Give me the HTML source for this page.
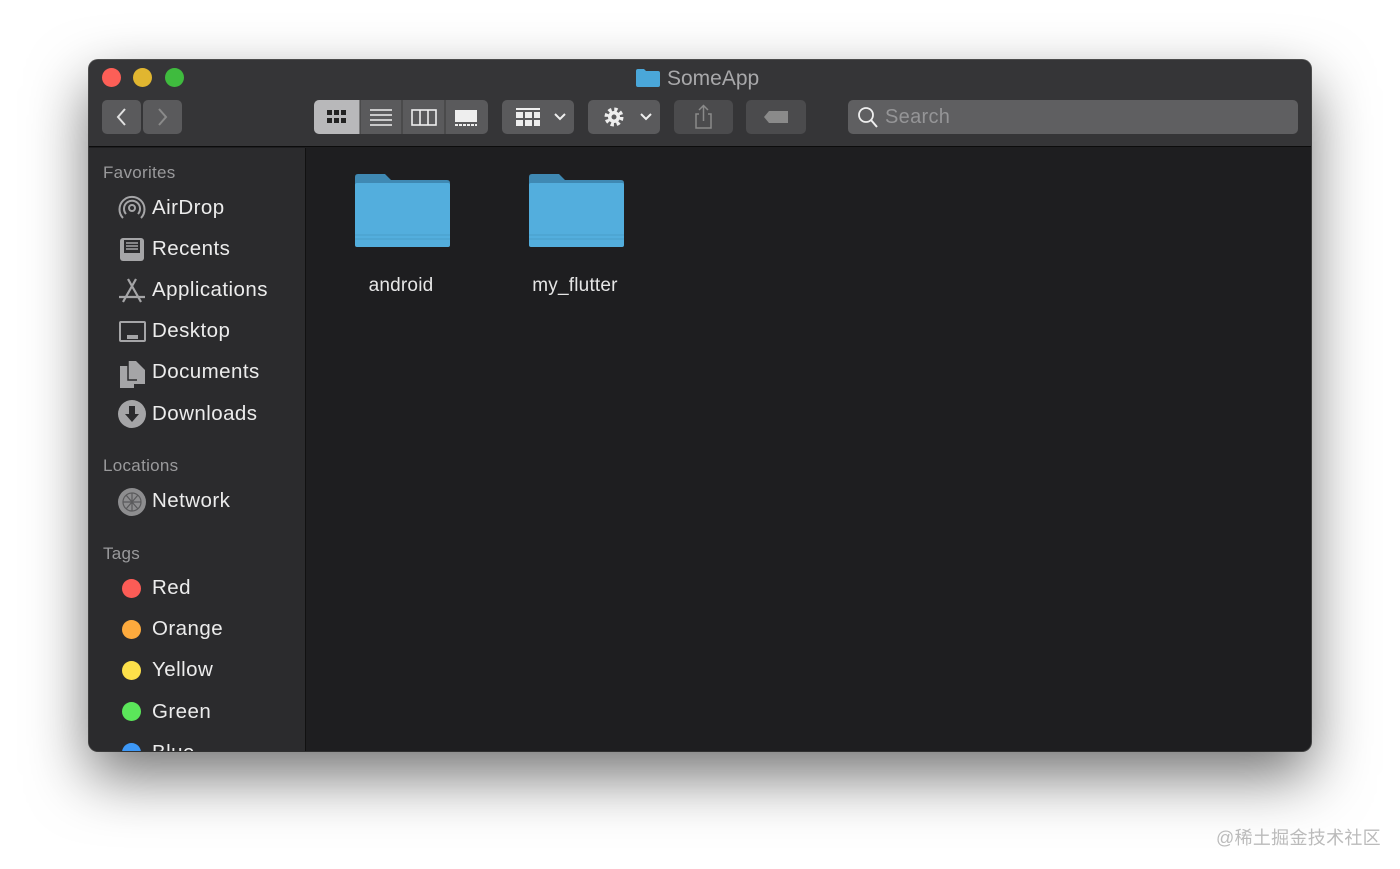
<!DOCTYPE html>
<html><head><style>
*{margin:0;padding:0;box-sizing:border-box}
body{width:1400px;height:869px;background:#fff;position:relative;overflow:hidden;font-family:"Liberation Sans",sans-serif}
.win{position:absolute;left:89px;top:60px;width:1222px;height:691px;border-radius:9px;overflow:hidden;background:#1e1e20;box-shadow:0 25px 60px rgba(0,0,0,.55),0 0 0 1px #555}
.tb{position:absolute;left:0;top:0;width:100%;height:87px;background:#353537;border-bottom:1px solid #0c0c0c}
.dot{position:absolute;top:8px;width:19px;height:19px;border-radius:50%}
.btn{position:absolute;top:40px;height:34px;background:#5a5a5c;border-radius:5px}
.side{position:absolute;left:0;top:88px;width:217px;bottom:0;background:#2b2b2d;border-right:1px solid #111}
.h{position:absolute;left:14px;color:#9a9a9c;font-size:17px;letter-spacing:.3px}
.it{position:absolute;left:63px;color:#ececec;font-size:20.5px;line-height:24px;letter-spacing:.45px}
.ic{position:absolute;left:28px}
.tag{position:absolute;left:33px;width:19px;height:19px;border-radius:50%}
.fold{position:absolute;top:113px;width:95px;height:75px}
.lbl{position:absolute;top:215px;color:#e6e6e6;font-size:19px;text-align:center;width:160px;letter-spacing:.2px}
</style></head><body>
<div class="win">
<div class="tb">
<div class="dot" style="left:13px;background:#fd5f57"></div>
<div class="dot" style="left:44px;background:#e1b630"></div>
<div class="dot" style="left:76px;background:#3fbb3e"></div>
<svg style="position:absolute;left:547px;top:8px" width="24" height="19"><path d="M0 3 Q0 1 2 1 H8 L10 3 H22 Q24 3 24 5 V17 Q24 19 22 19 H2 Q0 19 0 17Z" fill="#4aa7d9"/></svg>
<div style="position:absolute;left:578px;top:7px;color:#a8a8aa;font-size:21px">SomeApp</div>
<div class="btn" style="left:13px;width:39px"><svg width="39" height="34"><path d="M23 9 L16 17 L23 25" stroke="#e0e0e0" stroke-width="2" fill="none"/></svg></div>
<div class="btn" style="left:54px;width:39px"><svg width="39" height="34"><path d="M16 9 L23 17 L16 25" stroke="#8a8a8a" stroke-width="2" fill="none"/></svg></div>
<div class="btn" style="left:225px;width:174px;overflow:hidden">
<div style="position:absolute;left:0;top:0;width:46px;height:34px;background:#b8b8ba"></div>
<svg width="174" height="34" style="position:absolute;left:0;top:0">
<g fill="#222"><rect x="13" y="10" width="5" height="5"/><rect x="20" y="10" width="5" height="5"/><rect x="27" y="10" width="5" height="5"/><rect x="13" y="18" width="5" height="5"/><rect x="20" y="18" width="5" height="5"/><rect x="27" y="18" width="5" height="5"/></g>
<path d="M56 10H78M56 15H78M56 20H78M56 25H78" stroke="#eee" stroke-width="1.6"/>
<rect x="98" y="10" width="24" height="15" fill="none" stroke="#eee" stroke-width="1.6"/><path d="M106 10V25M114 10V25" stroke="#eee" stroke-width="1.6"/>
<rect x="141" y="10" width="22" height="12" fill="#eee"/><path d="M141 25H163" stroke="#eee" stroke-width="2" stroke-dasharray="3 1"/>
<path d="M46 0V34M88 0V34M131 0V34" stroke="#3a3a3a"/>
</svg></div>
<div class="btn" style="left:413px;width:72px"><svg width="72" height="34"><g fill="#eee"><rect x="14" y="8" width="24" height="2"/><rect x="14" y="12" width="7" height="6"/><rect x="23" y="12" width="7" height="6"/><rect x="32" y="12" width="6" height="6"/><rect x="14" y="20" width="7" height="6"/><rect x="23" y="20" width="7" height="6"/><rect x="32" y="20" width="6" height="6"/></g><path d="M53 14 L58 19 L63 14" stroke="#eee" stroke-width="2" fill="none"/></svg></div>
<div class="btn" style="left:499px;width:72px"><svg width="72" height="34"><circle cx="26" cy="17" r="7" fill="none" stroke="#eee" stroke-width="5" stroke-dasharray="3 2.5"/><circle cx="26" cy="17" r="6" fill="#eee"/><circle cx="26" cy="17" r="2.5" fill="#5a5a5c"/><path d="M53 14 L58 19 L63 14" stroke="#eee" stroke-width="2" fill="none"/></svg></div>
<div class="btn" style="left:585px;width:59px;background:#4b4b4d"><svg width="59" height="34"><path d="M25 14 H22 V28 H37 V14 H34 M29.5 21 V6 M25 10 L29.5 5.5 L34 10" stroke="#8a8a8a" stroke-width="1.5" fill="none"/></svg></div>
<div class="btn" style="left:657px;width:60px;background:#4b4b4d"><svg width="60" height="34"><path d="M18 17 L23 11 H42 V23 H23Z" fill="#8a8a8a"/></svg></div>
<div class="btn" style="left:759px;width:450px;background:#5f5f61"><svg width="30" height="34" style="position:absolute;left:6px;top:0"><circle cx="12" cy="15" r="7" fill="none" stroke="#eee" stroke-width="1.8"/><path d="M17 20 L23 27" stroke="#eee" stroke-width="2"/></svg><div style="position:absolute;left:37px;top:6px;color:#959597;font-size:20px;letter-spacing:.3px">Search</div></div>
</div>
<div class="side"></div>
<div style="position:absolute;left:0;top:89px;width:217px;bottom:0">
<div class="h" style="top:14px">Favorites</div>
<svg class="ic" style="top:45px" width="30" height="30"><g fill="none" stroke="#a5a5a7" stroke-width="2"><circle cx="15" cy="14" r="3"/><path d="M9 20a8 8 0 1 1 12 0"/><path d="M6 24a12.5 12.5 0 1 1 18 0"/></g></svg>
<div class="it" style="top:47px">AirDrop</div>
<svg class="ic" style="top:86px" width="30" height="30"><rect x="3" y="3" width="24" height="23" rx="3" fill="#a5a5a7"/><rect x="7" y="5" width="16" height="13" fill="#2b2b2d"/><path d="M9 8H21M9 11H21M9 14H21" stroke="#a5a5a7" stroke-width="1.5"/></svg>
<div class="it" style="top:88px">Recents</div>
<svg class="ic" style="top:127px" width="30" height="30"><path d="M11 3 L24 26 M19 3 L6 26 M2 21 H28" stroke="#a5a5a7" stroke-width="2.2" fill="none"/></svg>
<div class="it" style="top:129px">Applications</div>
<svg class="ic" style="top:168px" width="30" height="30"><rect x="2" y="4" width="27" height="21" rx="2" fill="#a5a5a7"/><rect x="4" y="6" width="23" height="17" fill="#2b2b2d"/><rect x="10" y="18" width="11" height="4" fill="#a5a5a7"/></svg>
<div class="it" style="top:170px">Desktop</div>
<svg class="ic" style="top:209px" width="30" height="30"><path d="M11 3H19L28 12V26H17V30H3V8H11Z" fill="#a5a5a7"/><path d="M11 3V22H20" stroke="#2b2b2d" stroke-width="1.5" fill="none"/></svg>
<div class="it" style="top:211px">Documents</div>
<svg class="ic" style="top:250px" width="30" height="30"><circle cx="15" cy="15" r="14" fill="#a5a5a7"/><path d="M12 7H18V15H22L15 23L8 15H12Z" fill="#2b2b2d"/></svg>
<div class="it" style="top:253px">Downloads</div>
<div class="h" style="top:307px">Locations</div>
<svg class="ic" style="top:338px" width="30" height="30"><circle cx="15" cy="15" r="14" fill="#8d8d8f"/><g stroke="#5a5a5c" stroke-width="1.2" fill="none"><circle cx="15" cy="15" r="9"/><path d="M6 15H24M15 6V24M9 8L21 22M21 8L9 22"/></g></svg>
<div class="it" style="top:340px">Network</div>
<div class="h" style="top:395px">Tags</div>
<div class="tag" style="top:430px;background:#fc5c56"></div><div class="it" style="top:427px">Red</div>
<div class="tag" style="top:471px;background:#fdaa3d"></div><div class="it" style="top:468px">Orange</div>
<div class="tag" style="top:512px;background:#fde04a"></div><div class="it" style="top:509px">Yellow</div>
<div class="tag" style="top:553px;background:#5be65a"></div><div class="it" style="top:551px">Green</div>
<div class="tag" style="top:594px;background:#3d98f7"></div><div class="it" style="top:592px">Blue</div>
</div>
<svg class="fold" style="left:266px" viewBox="0 0 95 75"><path d="M0 4Q0 1 3 1H30L36 7H92Q95 7 95 10V20H0Z" fill="#3f89b3"/><rect x="0" y="10" width="95" height="64" rx="2" fill="#53aedd"/><path d="M0 62H95M0 66H95" stroke="#4a9dc9"/></svg>
<svg class="fold" style="left:440px" viewBox="0 0 95 75"><path d="M0 4Q0 1 3 1H30L36 7H92Q95 7 95 10V20H0Z" fill="#3f89b3"/><rect x="0" y="10" width="95" height="64" rx="2" fill="#53aedd"/><path d="M0 62H95M0 66H95" stroke="#4a9dc9"/></svg>
<div class="lbl" style="left:232px">android</div>
<div class="lbl" style="left:406px">my_flutter</div>
</div>
<div style="position:absolute;left:1216px;top:824px;color:#bbb;font-size:18px;letter-spacing:.3px;font-family:'Liberation Sans','Noto Sans CJK SC',sans-serif">@稀土掘金技术社区</div>
</body></html>
